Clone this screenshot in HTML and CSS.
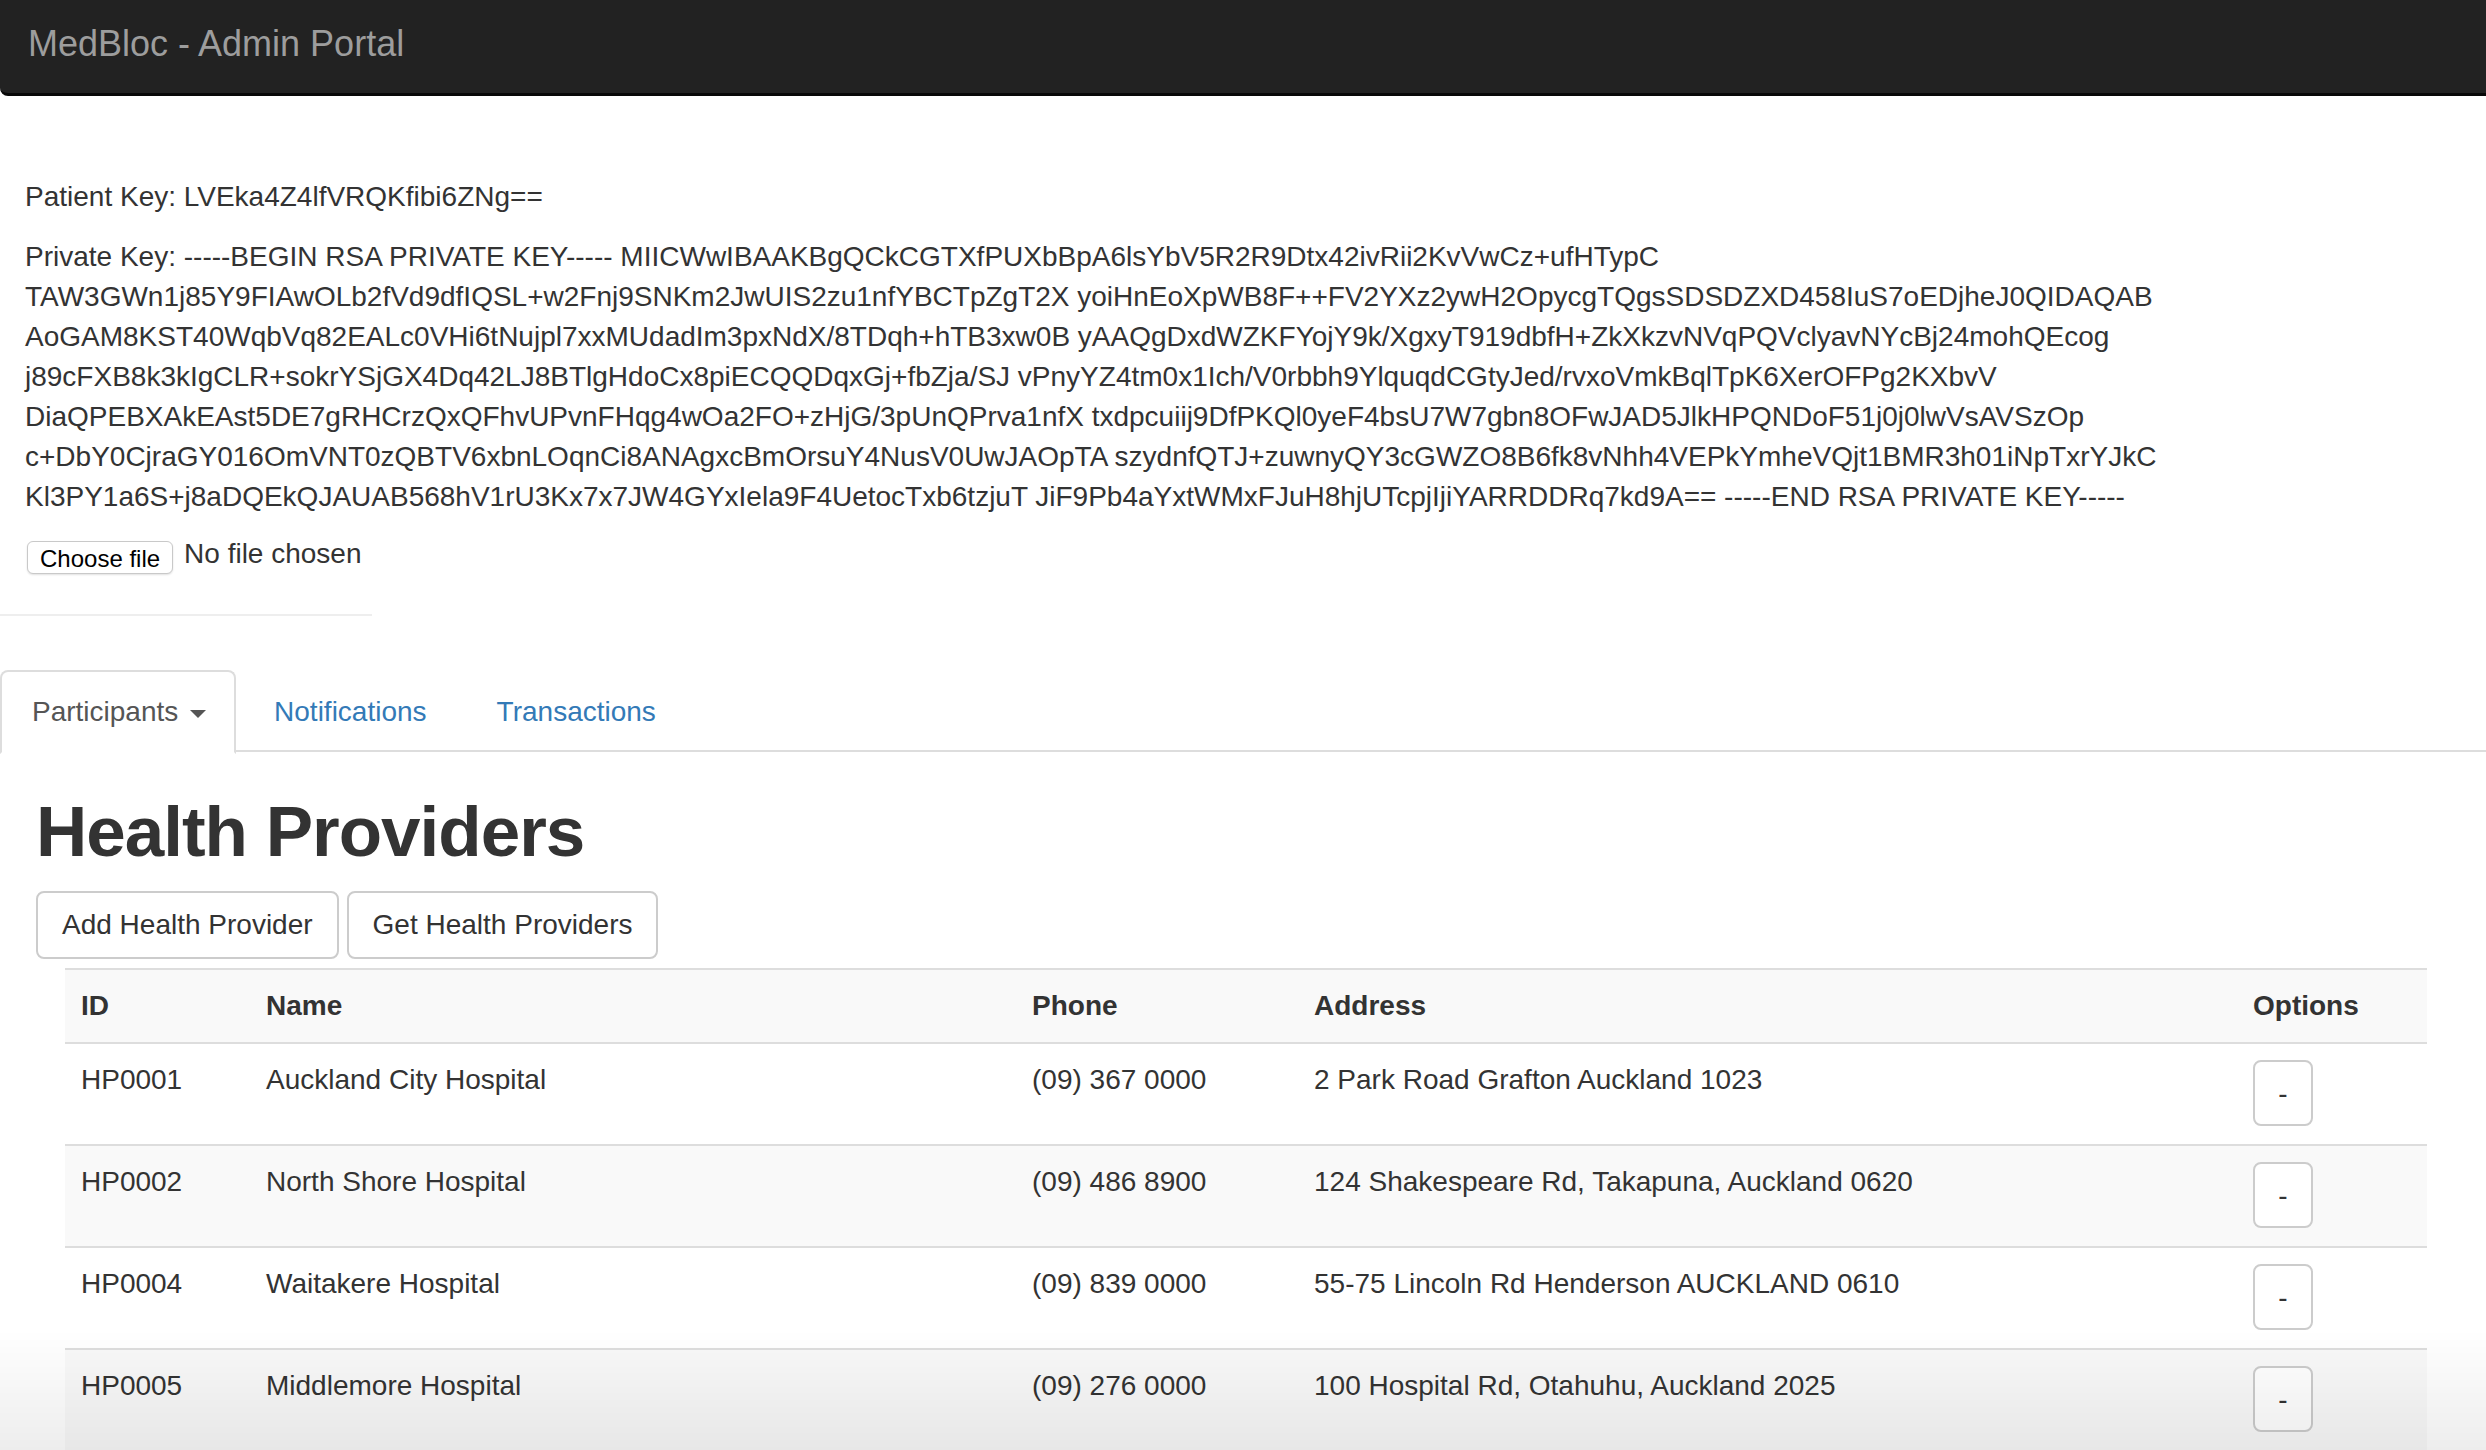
FILE: index.html
```html
<!DOCTYPE html>
<html lang="en">
<head>
<meta charset="utf-8">
<title>MedBloc - Admin Portal</title>
<link rel="stylesheet" href="styles.css">
</head>
<body>
<header class="navbar">
  <span class="brand">MedBloc - Admin Portal</span>
</header>

<section class="keys">
  <p class="key-line">Patient Key: LVEka4Z4lfVRQKfibi6ZNg==</p>
  <p class="key-block">Private Key: -----BEGIN RSA PRIVATE KEY----- MIICWwIBAAKBgQCkCGTXfPUXbBpA6lsYbV5R2R9Dtx42ivRii2KvVwCz+ufHTypC<br>TAW3GWn1j85Y9FIAwOLb2fVd9dfIQSL+w2Fnj9SNKm2JwUIS2zu1nfYBCTpZgT2X yoiHnEoXpWB8F++FV2YXz2ywH2OpycgTQgsSDSDZXD458IuS7oEDjheJ0QIDAQAB<br>AoGAM8KST40WqbVq82EALc0VHi6tNujpl7xxMUdadIm3pxNdX/8TDqh+hTB3xw0B yAAQgDxdWZKFYojY9k/XgxyT919dbfH+ZkXkzvNVqPQVclyavNYcBj24mohQEcog<br>j89cFXB8k3kIgCLR+sokrYSjGX4Dq42LJ8BTlgHdoCx8piECQQDqxGj+fbZja/SJ vPnyYZ4tm0x1Ich/V0rbbh9YlquqdCGtyJed/rvxoVmkBqlTpK6XerOFPg2KXbvV<br>DiaQPEBXAkEAst5DE7gRHCrzQxQFhvUPvnFHqg4wOa2FO+zHjG/3pUnQPrva1nfX txdpcuiij9DfPKQl0yeF4bsU7W7gbn8OFwJAD5JlkHPQNDoF51j0j0lwVsAVSzOp<br>c+DbY0CjraGY016OmVNT0zQBTV6xbnLOqnCi8ANAgxcBmOrsuY4NusV0UwJAOpTA szydnfQTJ+zuwnyQY3cGWZO8B6fk8vNhh4VEPkYmheVQjt1BMR3h01iNpTxrYJkC<br>Kl3PY1a6S+j8aDQEkQJAUAB568hV1rU3Kx7x7JW4GYxIela9F4UetocTxb6tzjuT JiF9Pb4aYxtWMxFJuH8hjUTcpjIjiYARRDDRq7kd9A== -----END RSA PRIVATE KEY-----</p>
  <div class="file-row">
    <span class="file-btn">Choose file</span>
    <span class="file-name">No file chosen</span>
  </div>
</section>

<hr class="divider">

<nav class="tabs">
  <a class="tab active" href="#">Participants <span class="caret"></span></a>
  <a class="tab" href="#">Notifications</a>
  <a class="tab" href="#">Transactions</a>
</nav>

<main class="content">
  <h1 class="title">Health Providers</h1>
  <div class="actions">
    <button class="btn">Add Health Provider</button>
    <button class="btn">Get Health Providers</button>
  </div>
  <table class="table">
    <colgroup>
      <col class="c-id"><col class="c-name"><col class="c-phone"><col class="c-address"><col class="c-options">
    </colgroup>
    <tbody>
      <tr class="striped">
        <th>ID</th><th>Name</th><th>Phone</th><th>Address</th><th>Options</th>
      </tr>
      <tr>
        <td>HP0001</td><td>Auckland City Hospital</td><td>(09) 367 0000</td><td>2 Park Road Grafton Auckland 1023</td>
        <td><button class="btn btn-opt">-</button></td>
      </tr>
      <tr class="striped">
        <td>HP0002</td><td>North Shore Hospital</td><td>(09) 486 8900</td><td>124 Shakespeare Rd, Takapuna, Auckland 0620</td>
        <td><button class="btn btn-opt">-</button></td>
      </tr>
      <tr>
        <td>HP0004</td><td>Waitakere Hospital</td><td>(09) 839 0000</td><td>55-75 Lincoln Rd Henderson AUCKLAND 0610</td>
        <td><button class="btn btn-opt">-</button></td>
      </tr>
      <tr class="striped">
        <td>HP0005</td><td>Middlemore Hospital</td><td>(09) 276 0000</td><td>100 Hospital Rd, Otahuhu, Auckland 2025</td>
        <td><button class="btn btn-opt">-</button></td>
      </tr>
    </tbody>
  </table>
</main>
</body>
</html>
```

FILE: styles.css
```css
html, body {
  margin: 0;
  padding: 0;
  background: #fff;
}

body {
  font-family: "Liberation Sans", Arial, Helvetica, sans-serif;
  font-size: 28px;
  line-height: 40px;
  color: #333;
}

body::after {
  content: "";
  position: fixed;
  left: 0;
  right: 0;
  bottom: 0;
  height: 120px;
  background: linear-gradient(to bottom, rgba(0, 0, 0, 0), rgba(0, 0, 0, 0.07));
  pointer-events: none;
}

.navbar {
  height: 93px;
  background: #222;
  border-bottom: 3px solid #080808;
  border-radius: 0 0 0 8px;
  box-sizing: content-box;
}

.brand {
  display: block;
  padding: 24px 0 0 28px;
  font-size: 36px;
  line-height: 40px;
  color: #9d9d9d;
}

.keys {
  padding: 81px 25px 0 25px;
}

.key-line,
.key-block {
  margin: 0 0 20px 0;
}

.key-block {
  white-space: nowrap;
}

.file-row {
  display: flex;
  align-items: flex-start;
  height: 40px;
  margin-top: -3px;
}

.file-btn {
  display: inline-block;
  box-sizing: border-box;
  margin: 7px 0 0 2px;
  height: 33px;
  padding: 0 12px;
  font-family: "Liberation Sans", Arial, sans-serif;
  font-size: 24px;
  line-height: 33px;
  color: #000;
  background: #fff;
  border: 1px solid #c9c9c9;
  border-radius: 6px;
  box-shadow: 0 1px 2px rgba(0, 0, 0, 0.12);
}

.file-name {
  margin-left: 11px;
  color: #333;
}

.divider {
  width: 372px;
  margin: 40px 0 54px 0;
  border: 0;
  border-top: 2px solid #eee;
  height: 0;
}

.tabs {
  display: flex;
  border-bottom: 2px solid #ddd;
  height: 80px;
}

.tab {
  display: block;
  margin-right: 4px;
  padding: 20px 30px;
  line-height: 40px;
  color: #337ab7;
  text-decoration: none;
  border: 2px solid transparent;
  border-radius: 8px 8px 0 0;
}

.tab.active {
  color: #555;
  background: #fff;
  border-color: #ddd;
  border-bottom-color: #fff;
  height: 40px;
  padding-right: 28px;
}

.tab + .tab {
  margin-left: 2px;
}

.caret {
  display: inline-block;
  width: 0;
  height: 0;
  margin-left: 4px;
  vertical-align: middle;
  border-top: 8px solid #555;
  border-left: 8px solid transparent;
  border-right: 8px solid transparent;
}

.content {
  padding: 0 0 0 36px;
}

.title {
  margin: 40px 0 20px 0;
  font-size: 71px;
  line-height: 79px;
  font-weight: 600;
  color: #333;
  letter-spacing: -1px;
}

.actions {
  display: flex;
  gap: 8px;
}

.btn {
  display: inline-block;
  box-sizing: border-box;
  height: 68px;
  padding: 12px 24px;
  font-family: "Liberation Sans", Arial, sans-serif;
  font-size: 28px;
  line-height: 40px;
  color: #333;
  background: #fff;
  border: 2px solid #ccc;
  border-radius: 8px;
  cursor: pointer;
}

.btn-opt {
  width: 60px;
  height: 66px;
  padding: 12px 0;
  text-align: center;
}

.table {
  margin: 9px 59px 0 29px;
  width: 2362px;
  table-layout: fixed;
  border-collapse: collapse;
  border-spacing: 0;
}

.c-id { width: 185px; }
.c-name { width: 766px; }
.c-phone { width: 282px; }
.c-address { width: 939px; }
.c-options { width: 190px; }

.table th,
.table td {
  padding: 16px;
  text-align: left;
  vertical-align: top;
  border-top: 2px solid #ddd;
  line-height: 40px;
}

.table th {
  font-weight: bold;
}

.table td {
  padding-bottom: 18px;
}

.striped {
  background: #f9f9f9;
}
```
